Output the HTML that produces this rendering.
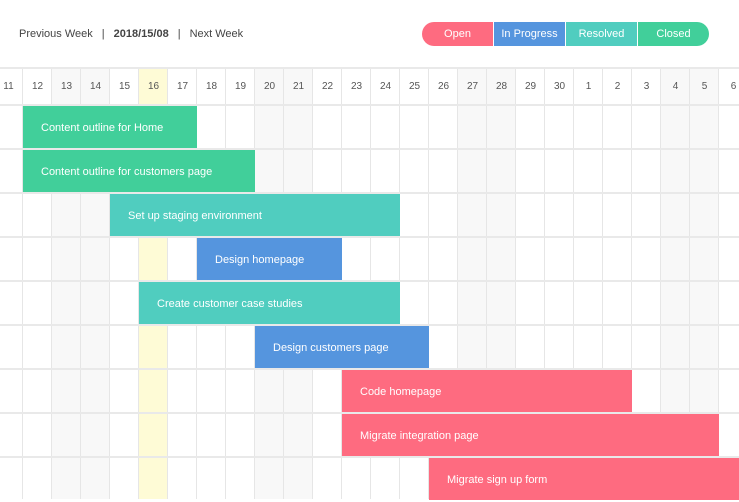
<!DOCTYPE html>
<html><head><style>
*{margin:0;padding:0;box-sizing:border-box}
body{width:739px;height:499px;overflow:hidden;background:#fff;font-family:"Liberation Sans",sans-serif;position:relative;color:#444}
.nav{position:absolute;top:28px;left:19px;font-size:11px;color:#444}
.nav b{font-weight:bold}
.nav span{margin:0 9px}
.btns{position:absolute;top:22px;left:422px;display:flex;height:24px}
.btns div{width:71px;height:24px;color:#fff;font-size:11px;line-height:24px;text-align:center;margin-right:1px}
.col{position:absolute;top:68px;height:431px;width:29px;border-left:1px solid #e6e6e6}
.hd{position:absolute;top:68px;height:37px;width:29px;font-size:10px;color:#555;text-align:center;line-height:37px}
.hl{position:absolute;left:0;width:739px;height:2px;background:#e9e9e9}
.bar{position:absolute;height:42px;color:#fff;font-size:11px;line-height:44px;padding-left:18px;white-space:nowrap}
.g{background:#41cf9a}.t{background:#50cdbf}.b{background:#5595de}.r{background:#fe6b80}
</style></head><body>
<div class="nav">Previous Week<span>|</span><b>2018/15/08</b><span>|</span>Next Week</div>
<div class="btns">
<div class="r" style="border-radius:12px 0 0 12px">Open</div>
<div class="b">In Progress</div>
<div class="t">Resolved</div>
<div class="g" style="border-radius:0 12px 12px 0">Closed</div>
</div>
<div id="grid"></div>
<script>
var days=[11,12,13,14,15,16,17,18,19,20,21,22,23,24,25,26,27,28,29,30,1,2,3,4,5,6];
var h='';
for(var i=0;i<days.length;i++){
 var x=-7+29*i;
 var bg='#fff';
 if(i==2||i==3||i==9||i==10||i==16||i==17||i==23||i==24)bg='#f8f8f8';
 if(i==5)bg='#fefbd6';
 h+='<div class="col" style="left:'+x+'px;background:'+bg+'"></div>';
 h+='<div class="hd" style="left:'+(x+1)+'px">'+days[i]+'</div>';
}
h+='<div class="hl" style="top:67px"></div>';
for(var r=0;r<9;r++)h+='<div class="hl" style="top:'+(104+44*r)+'px"></div>';
var bars=[[23,197,'g','Content outline for Home'],[23,255,'g','Content outline for customers page'],[110,400,'t','Set up staging environment'],[197,342,'b','Design homepage'],[139,400,'t','Create customer case studies'],[255,429,'b','Design customers page'],[342,632,'r','Code homepage'],[342,719,'r','Migrate integration page'],[429,760,'r','Migrate sign up form']];
for(var k=0;k<bars.length;k++){var b=bars[k];
 h+='<div class="bar '+b[2]+'" style="top:'+(106+44*k)+'px;left:'+b[0]+'px;width:'+(b[1]-b[0])+'px">'+b[3]+'</div>';}
document.getElementById('grid').innerHTML=h;
</script>
</body></html>
